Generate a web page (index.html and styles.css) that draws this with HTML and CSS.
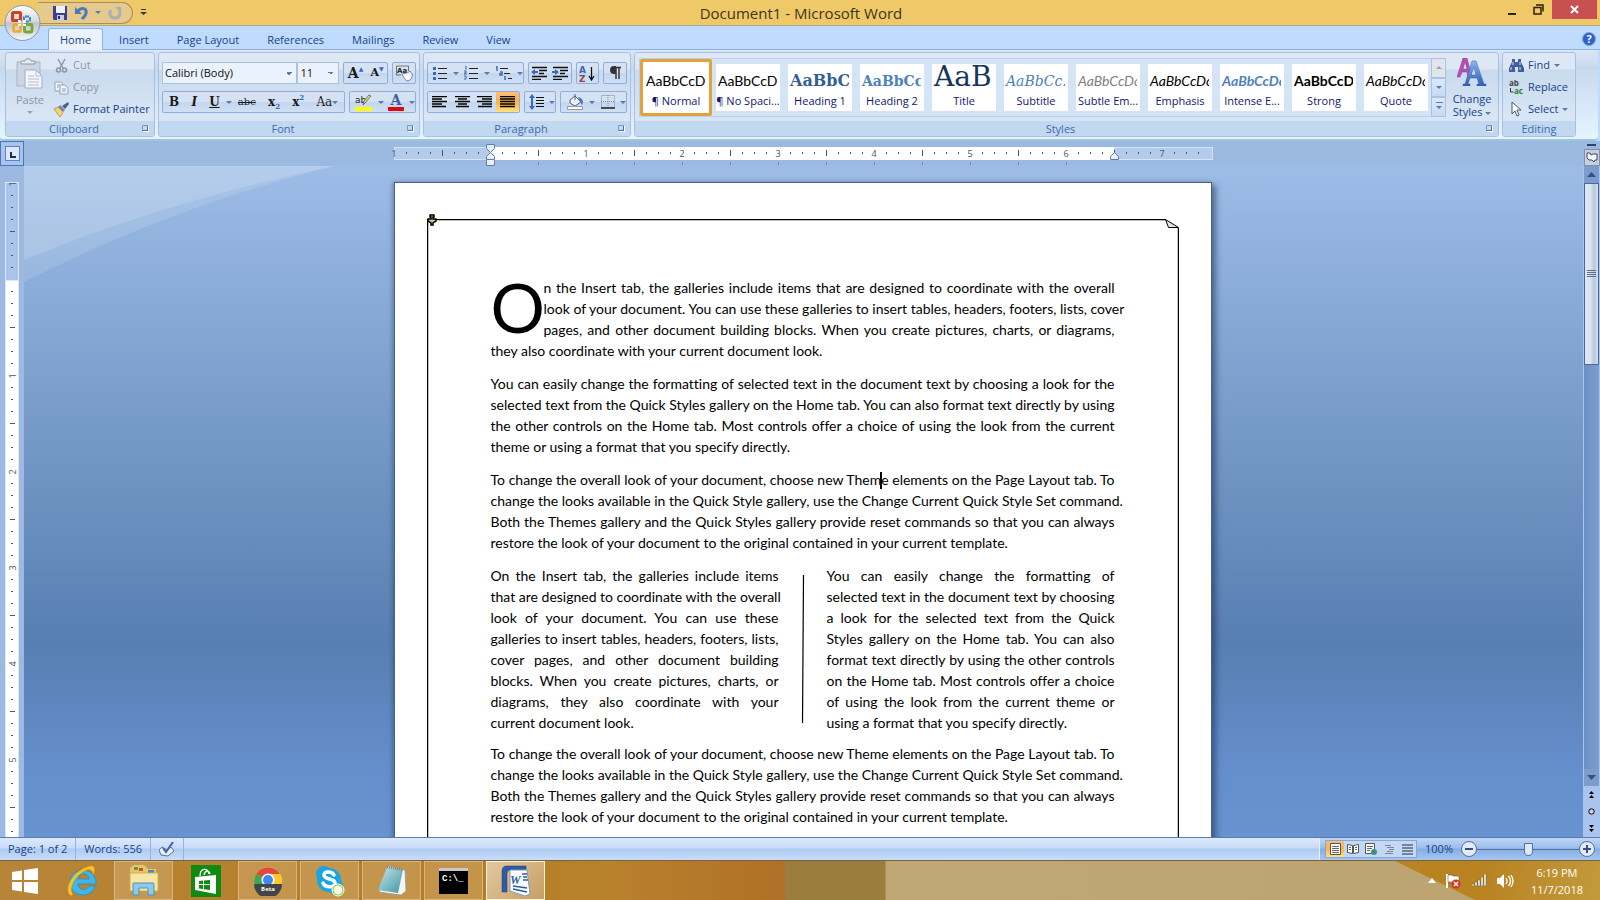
FILE: index.html
```html
<!DOCTYPE html>
<html lang="en">
<head>
<meta charset="utf-8">
<title>Document1 - Microsoft Word</title>
<link rel="stylesheet" href="styles.css">
</head>
<body>
<svg class="defs" aria-hidden="true">
  <defs>
    <linearGradient id="gBlue" x1="0" y1="0" x2="0" y2="1"><stop offset="0" stop-color="#8db4ee"/><stop offset="1" stop-color="#2c5fae"/></linearGradient>
    <linearGradient id="gOrb" x1="0" y1="0" x2="0" y2="1"><stop offset="0" stop-color="#fdfdfd"/><stop offset=".45" stop-color="#d6dae2"/><stop offset=".5" stop-color="#bcc3d0"/><stop offset="1" stop-color="#f6f8fb"/></linearGradient>
    <linearGradient id="gTeal" x1="0" y1="0" x2="1" y2="1"><stop offset="0" stop-color="#c8e6ea"/><stop offset="1" stop-color="#3f97a5"/></linearGradient>
  </defs>
</svg>

<header class="titlebar">
  <div class="quick">
    <button class="plain" aria-label="Save"><svg width="14" height="14" viewBox="0 0 14 14"><path d="M0 0h14v14H1l-1-1z" fill="#3c3f94"/><path d="M3 0h9v7H3z" fill="#eef2fb"/><path d="M4 9h7v5H4z" fill="#c7cbe6"/><path d="M5 10h2v3H5z" fill="#2b2c6a"/></svg></button>
    <button class="plain" aria-label="Undo"><svg width="14" height="14" viewBox="0 0 14 14"><path d="M4 5c3-4 9-3 8 2 0 2-2 4-4 6" fill="none" stroke="#4a78c4" stroke-width="3"/><path d="M1 1v7h7z" fill="#4a78c4"/></svg></button>
    <i class="caret"></i>
    <button class="plain" aria-label="Redo"><svg width="14" height="14" viewBox="0 0 14 14"><path d="M3 4c-3 4 0 8 4 8 5 0 6-5 4-8" fill="none" stroke="#a9b0b8" stroke-width="3"/><path d="M7 1h6v6z" fill="#a9b0b8"/></svg></button>
  </div>
  <button class="plain customize" aria-label="Customize Quick Access Toolbar"><svg width="7" height="7" viewBox="0 0 7 7"><path d="M1 0h5v1H1zM0 3h7L3.500 6z" fill="#2f3a4c"/></svg></button>
  <h1>Document1 - Microsoft Word</h1>
  <div class="winctl">
    <button class="plain" aria-label="Minimize"><svg width="10" height="12"><path d="M1 9h8v2H1z" fill="#2b220f"/></svg></button>
    <button class="plain" aria-label="Restore"><svg width="11" height="11"><path d="M1 3.500h7v6.500H1zM3 1h7v6.500" fill="none" stroke="#2b220f" stroke-width="1.500"/></svg></button>
    <button class="plain close" aria-label="Close"><svg width="9" height="9"><path d="M1 1l7 7M8 1L1 8" stroke="#fff" stroke-width="2"/></svg></button>
  </div>
</header>
<button class="orb" aria-label="Office Button"><svg width="37" height="38" viewBox="0 0 37 38">
  <circle cx="18.500" cy="19" r="17.500" fill="url(#gOrb)" stroke="#8d96a8"/>
  <g fill="none"><rect x="8.500" y="8.500" width="8" height="8" rx="1" stroke="#d4401c" stroke-width="3.200"/><rect x="20" y="12.500" width="6" height="5" rx="1" stroke="#3b86c8" stroke-width="2" stroke-dasharray="4 1"/><rect x="9.500" y="20.500" width="7" height="7" rx="1" stroke="#f0a91c" stroke-width="2.400"/><rect x="20.500" y="20.500" width="7.500" height="7.500" rx="1" stroke="#76a832" stroke-width="2.800"/></g>
  <path d="M14 16h3v3h-3zM19 16h3v3h-3zM14 20h3v2h-3zM19 20h3v2h-3z" fill="#eef1f6"/></svg></button>

<nav class="tabs">
  <button class="tab on">Home</button><button class="tab">Insert</button><button class="tab">Page Layout</button><button class="tab">References</button><button class="tab">Mailings</button><button class="tab">Review</button><button class="tab">View</button>
  <button class="plain help" aria-label="Help"><svg width="14" height="14"><circle cx="7" cy="7" r="6.500" fill="#2e62c9" stroke="#7fa1dd"/><text x="7" y="11" text-anchor="middle" class="helpq">?</text></svg></button>
</nav>

<section class="ribbon">
  <div class="group clipboard">
    <div class="body">
      <button class="paste" disabled><svg width="28" height="31" viewBox="0 0 28 31"><path d="M1 4h23v24H1z" fill="#ccd5e3" stroke="#a9b3c4"/><path d="M5 6V3h4c0-3 6-3 6 0h4v3z" fill="#e4e8ef" stroke="#8f99ab"/><path d="M9 12h11l6 6v12H9z" fill="#f2f5fb" stroke="#a3afc2"/><path d="M20 12v6h6M12 18h6M12 21h11M12 24h11M12 27h11" fill="none" stroke="#b4bfd2"/></svg><span>Paste</span><i class="caret dim"></i></button>
      <div class="stack">
        <button class="cmd" disabled><svg width="15" height="15" viewBox="0 0 15 15"><path d="M4 1l5 9M11 1L6 10" stroke="#8996ab" stroke-width="1.500"/><circle cx="4.500" cy="12" r="2" fill="none" stroke="#8996ab" stroke-width="1.500"/><circle cx="10.500" cy="12" r="2" fill="none" stroke="#8996ab" stroke-width="1.500"/></svg>Cut</button>
        <button class="cmd" disabled><svg width="15" height="15" viewBox="0 0 15 15"><path d="M1 2h6l2 2v7H1z" fill="#eef2f9" stroke="#97a3b8"/><path d="M6 5h5l3 3v6H6z" fill="#eef2f9" stroke="#97a3b8"/><path d="M3 5h3M3 7h2M8 9h4M8 11h4" stroke="#97a3b8"/></svg>Copy</button>
        <button class="cmd"><svg width="15" height="15" viewBox="0 0 15 15"><path d="M14 0l1 2-4 5-3-3z" fill="#4a5f8c"/><path d="M6 3l5 5-2 2-5-5z" fill="#8b7cb0"/><path d="M4 5l5 5c-1 3-2 4-3 5L0 7z" fill="#f1d477" stroke="#a98532" stroke-width=".7"/></svg>Format Painter</button>
      </div>
    </div>
    <h2>Clipboard<i class="launch"></i></h2>
  </div>

  <div class="group font">
    <div class="body rows">
      <div class="row">
        <select class="combo face" aria-label="Font"><option>Calibri (Body)</option></select><select class="combo size" aria-label="Font Size"><option>11</option></select>
        <div class="set w44"><button aria-label="Grow Font" class="ser big">A<sup class="up">▲</sup></button><button aria-label="Shrink Font" class="ser small">A<sup class="up">▼</sup></button></div>
        <div class="set w24"><button aria-label="Clear Formatting"><svg width="17" height="17" viewBox="0 0 17 17"><text x="1" y="8" class="tiny">Aa</text><path d="M.5 1h12v5M.5 1v9H5" fill="none" stroke="#555" stroke-width=".8"/><path d="M6 9c2-1 5 0 8-3l2 3c1 3-1 6-4 7-3 0-4-4-6-7z" fill="#f4f6fb" stroke="#78829a"/></svg></button></div>
      </div>
      <div class="row">
        <div class="set w184">
          <button class="ser b">B</button><button class="ser i">I</button><button class="ser u">U</button><i class="caret"></i><button class="ser strike">abc</button><button class="ser">x<sub>2</sub></button><button class="ser">x<sup>2</sup></button><button class="ser aa">Aa<i class="caret"></i></button>
        </div>
        <div class="set w67">
          <button aria-label="Text Highlight Color"><svg width="18" height="17" viewBox="0 0 18 17"><text x="0" y="9" class="tiny ab">ab</text><path d="M16 2l-6 7-2 2 1-4 5-6z" fill="#e6e06a" stroke="#555" stroke-width=".8"/><path d="M0 13h17v4H0z" fill="#ff0"/></svg></button><i class="caret"></i>
          <button aria-label="Font Color"><svg width="16" height="17" viewBox="0 0 16 17"><text x="8" y="11" text-anchor="middle" class="fontA">A</text><path d="M0 13h16v4H0z" fill="#e8050b"/></svg></button><i class="caret"></i>
        </div>
      </div>
    </div>
    <h2>Font<i class="launch"></i></h2>
  </div>

  <div class="group para">
    <div class="body rows">
      <div class="row">
        <div class="set w99">
          <button aria-label="Bullets"><svg width="15" height="14"><path d="M5 2.500h9M5 7.500h9M5 12.500h9" stroke="#222"/><path d="M0 1h3v3H0zM0 6h3v3H0zM0 11h3v3H0z" fill="#3c68b8"/></svg></button><i class="caret"></i>
          <button aria-label="Numbering"><svg width="15" height="14"><path d="M5 2.500h9M5 7.500h9M5 12.500h9" stroke="#222"/><path d="M1 0h1v4M0 5h2v2H0v1h3M0 10h2v3H0" fill="none" stroke="#3c68b8"/></svg></button><i class="caret"></i>
          <button aria-label="Multilevel List"><svg width="17" height="15"><path d="M5 2.500h8M9 7.500h6M13 12.500h4" stroke="#222"/><path d="M1 1h1v4M5 6h2v3H5V7M10 10v4" fill="none" stroke="#3c68b8" stroke-width="1.500"/></svg></button><i class="caret"></i>
        </div>
        <div class="set w45">
          <button aria-label="Decrease Indent"><svg width="17" height="14"><path d="M1 1.500h15M8 4.500h8M8 7.500h5M1 10.500h15M1 13.500h9" stroke="#111" stroke-width="1.500"/><path d="M0 6l4-3v2h3v2H4v2z" fill="#3c68b8"/></svg></button><button aria-label="Increase Indent"><svg width="17" height="14"><path d="M1 1.500h15M8 4.500h8M8 7.500h5M1 10.500h15M1 13.500h9" stroke="#111" stroke-width="1.500"/><path d="M7 6L3 3v2H0v2h3v2z" fill="#3c68b8"/></svg></button>
        </div>
        <div class="set w24"><button aria-label="Sort"><svg width="17" height="17"><text x="0" y="8" class="sort a">A</text><text x="0" y="17" class="sort z">Z</text><path d="M12.500 2v12M10 11l2.500 4 2.500-4" fill="none" stroke="#111" stroke-width="1.300"/></svg></button></div>
        <div class="set w24"><button aria-label="Show paragraph marks"><svg width="12" height="14"><path d="M6 1.500h6M7 1v12M10 1v12" stroke="#333" stroke-width="1.500"/><path d="M7 0H5a4 4 0 000 8h2z" fill="#333"/></svg></button></div>
      </div>
      <div class="row">
        <div class="set w93">
          <button aria-label="Align Left"><svg width="15" height="12"><path d="M0 .5h15M0 3h10M0 5.500h15M0 8h10M0 10.500h14" stroke="#000" stroke-width="1.300"/></svg></button><button aria-label="Center"><svg width="15" height="12"><path d="M0 .5h15M3 3h9M0 5.500h15M3 8h9M1 10.500h13" stroke="#000" stroke-width="1.300"/></svg></button><button aria-label="Align Right"><svg width="15" height="12"><path d="M0 .5h15M5 3h10M0 5.500h15M5 8h10M1 10.500h14" stroke="#000" stroke-width="1.300"/></svg></button><button class="hot" aria-label="Justify"><svg width="15" height="12"><path d="M0 .5h15M0 3h15M0 5.500h15M0 8h15M0 10.500h15" stroke="#000" stroke-width="1.300"/></svg></button>
        </div>
        <div class="set w32"><button aria-label="Line Spacing"><svg width="16" height="16"><path d="M7 3.500h8M7 6.500h8M7 9.500h8M7 12.500h8" stroke="#111"/><path d="M3 0l3 4H4v8h2l-3 4-3-4h2V4H0z" fill="#3c68b8"/></svg></button><i class="caret"></i></div>
        <div class="set w67">
          <button aria-label="Shading"><svg width="17" height="16" viewBox="0 0 17 16"><path d="M3 6l5-4 6 6-6 4-5-3z" fill="#eef3fa" stroke="#53617c"/><path d="M8 6V0" stroke="#53617c"/><path d="M11 3c5 1 6 5 4 8l-2-3z" fill="#4d7ac4"/><path d="M.5 12.500h15v3H.5z" fill="#fff" stroke="#9a9a9a"/></svg></button><i class="caret"></i>
          <button aria-label="Borders"><svg width="14" height="14"><path d="M.5.5h13v12H.5zM7 0v12M0 6.500h14" fill="none" stroke="#7d8695" stroke-dasharray="1 1"/><path d="M0 13h14" stroke="#222" stroke-width="1.500"/></svg></button><i class="caret"></i>
        </div>
      </div>
    </div>
    <h2>Paragraph<i class="launch"></i></h2>
  </div>

  <div class="group styles">
    <div class="body">
      <div class="gallery">
        <button class="tile sel"><span class="smp">AaBbCcDc</span><span class="nm">¶ Normal</span></button>
        <button class="tile"><span class="smp">AaBbCcDc</span><span class="nm">¶ No Spaci...</span></button>
        <button class="tile"><span class="smp h1s">AaBbCc</span><span class="nm">Heading 1</span></button>
        <button class="tile"><span class="smp h2s">AaBbCc</span><span class="nm">Heading 2</span></button>
        <button class="tile"><span class="smp ttl">AaB</span><span class="nm">Title</span></button>
        <button class="tile"><span class="smp subt">AaBbCc.</span><span class="nm">Subtitle</span></button>
        <button class="tile"><span class="smp it gray">AaBbCcDc</span><span class="nm">Subtle Em...</span></button>
        <button class="tile"><span class="smp it">AaBbCcDc</span><span class="nm">Emphasis</span></button>
        <button class="tile"><span class="smp it blue">AaBbCcDc</span><span class="nm">Intense E...</span></button>
        <button class="tile"><span class="smp strong">AaBbCcDc</span><span class="nm">Strong</span></button>
        <button class="tile"><span class="smp it">AaBbCcDc</span><span class="nm">Quote</span></button>
        <div class="scroller"><button disabled aria-label="Row up"><i class="caret flip dim"></i></button><button aria-label="Row down"><i class="caret"></i></button><button aria-label="More styles"><i class="caret more"></i></button></div>
      </div>
      <button class="change"><svg width="30" height="28" viewBox="0 0 30 28"><path fill-rule="evenodd" d="M6 0h4l5 19h-4l-1-5H5l-2 5H0zM8 4l-2 7h4z" fill="#b44fb4" stroke="#8c3a93" stroke-width=".5"/><path fill-rule="evenodd" d="M15 3h4l8 23h2v2h-9v-2h2l-2-6h-7l-2 6h2v2H6v-2h2zM17 9l-3 8h5z" fill="url(#gBlue)" stroke="#2f62ae" stroke-width=".5"/></svg><span>Change<br>Styles <i class="caret"></i></span></button>
    </div>
    <h2>Styles<i class="launch"></i></h2>
  </div>

  <div class="group editing">
    <div class="body stack">
      <button class="cmd"><svg width="15" height="15" viewBox="0 0 15 15"><path d="M3 1h3v3h3V1h3v3l3 6v4H9V9H6v5H0v-4l3-6z" fill="#3f5f9e"/><path d="M2 9v3M4 4v3M11 4v3M11 9v3" stroke="#dbe6f8"/></svg>Find <i class="caret"></i></button>
      <button class="cmd"><svg width="15" height="15" viewBox="0 0 15 15"><text x="0" y="6" class="rep">ab</text><text x="5" y="14" class="rep g">ac</text><path d="M1.500 8v4h3" fill="none" stroke="#333"/></svg>Replace</button>
      <button class="cmd"><svg width="15" height="15" viewBox="0 0 15 15"><path d="M3 0v12l3-3 2 5 2-1-2-5h4z" fill="#fff" stroke="#4a5670"/></svg>Select <i class="caret"></i></button>
    </div>
    <h2>Editing</h2>
  </div>
</section>

<main class="work">
  <button class="tabstop" aria-label="Tab selector"><span><svg width="6" height="6"><path d="M1 0v5h5" fill="none" stroke="#1c2f55" stroke-width="2"/></svg></span></button>
  <div class="hruler">
    <svg width="820" height="25" viewBox="0 0 820 25">
      <defs><pattern id="tk" x="96" y="0" width="96" height="25" patternUnits="userSpaceOnUse"><path d="M12.500 11v2M24.500 11v2M36.500 11v2M48.500 9v6M60.500 11v2M72.500 11v2M84.500 11v2" stroke="#4b5568"/></pattern></defs>
      <rect x=".5" y="6.500" width="818" height="12" fill="#b5cbeb" stroke="#d5e4f8"/>
      <rect x="96" y="6" width="624" height="13" fill="#fff"/>
      <rect x="0" y="0" width="806" height="25" fill="url(#tk)"/>
      <path d="M144.500 21v3M192.500 21v3M240.500 21v3M288.500 21v3M336.500 21v3M384.500 21v3M432.500 21v3M480.500 21v3M528.500 21v3M576.500 21v3M624.500 21v3M672.500 21v3" stroke="#6f87ad"/>
      <g class="num"><text x="0" y="16">1</text><text x="192" y="16">1</text><text x="288" y="16">2</text><text x="384" y="16">3</text><text x="480" y="16">4</text><text x="576" y="16">5</text><text x="672" y="16">6</text><text x="768" y="16">7</text></g>
      <g fill="#e8f0fb" stroke="#5f7fb2"><path d="M92.500 3.500h8v4l-4 4-4-4zM92.500 18.500v-3l4-4 4 4v3zM92.500 18.500h8v6h-8z"/><path d="M716.500 18.500v-3l4-4 4 4v3z"/></g>
    </svg>
  </div>
  <div class="corner"><i></i><button aria-label="View Ruler"><svg width="12" height="11"><path d="M1 1h3l1 2 2-1h4v6H9L8 10 6 8H3L1 6z" fill="#f3f5fa" stroke="#3d4a66"/></svg></button></div>

  <div class="vruler">
    <svg width="24" height="672" viewBox="0 0 24 672">
      <defs><pattern id="vk" x="0" y="114" width="24" height="96" patternUnits="userSpaceOnUse"><path d="M11 11.500h2M11 23.500h2M11 35.500h2M10 47.500h5M11 59.500h2M11 71.500h2M11 83.500h2" stroke="#4b5568"/></pattern></defs>
      <rect x="5" y="16" width="14" height="656" fill="#dbe7f8"/><rect x="6" y="17" width="12" height="97" fill="#aac4ea"/><rect x="6" y="115" width="12" height="557" fill="#fff"/>
      <rect x="0" y="20" width="24" height="652" fill="url(#vk)"/>
      <g class="num"><text transform="translate(16 18) rotate(-90)">1</text><text transform="translate(16 210) rotate(-90)">1</text><text transform="translate(16 306) rotate(-90)">2</text><text transform="translate(16 402) rotate(-90)">3</text><text transform="translate(16 498) rotate(-90)">4</text><text transform="translate(16 594) rotate(-90)">5</text></g>
    </svg>
  </div>
  <div class="canvas">
    <svg class="shine" width="312" height="118" viewBox="0 0 312 118"><path d="M0 0h310Q150 40 0 116z" fill="#fff" opacity=".12"/><path d="M0 0h310Q140 36 0 94z" fill="#fff" opacity=".15"/></svg>
    <article class="page">
      <svg class="frame" width="752" height="100%"><path d="M0 .5h739M.5 0v900M751.500 9v900" fill="none" stroke="#000" stroke-width="1.500"/><path d="M738.500.5l13 8h-10z" fill="#e4e4e4" stroke="#000"/></svg>
      <svg class="anchor" width="10" height="12"><path d="M3 1h4v2H6v2h3v2L6 9v2H4V9L1 7V5h3V3H3z" fill="#c8c89a" stroke="#000" stroke-width="1.500"/></svg>
      <p class="j"><span class="cap">O</span>
        <span>n the Insert tab, the galleries include items that are designed to coordinate with the overall</span><span>look of your document. You can use these galleries to insert tables, headers, footers, lists, cover</span><span>pages, and other document building blocks. When you create pictures, charts, or diagrams,</span><span class="end">they also coordinate with your current document look.</span></p>
      <p class="j"><span>You can easily change the formatting of selected text in the document text by choosing a look for the</span><span>selected text from the Quick Styles gallery on the Home tab. You can also format text directly by using</span><span>the other controls on the Home tab. Most controls offer a choice of using the look from the current</span><span class="end">theme or using a format that you specify directly.</span></p>
      <p class="j"><span>To change the overall look of your document, choose new Them<b class="ibeam"></b>e elements on the Page Layout tab. To</span><span>change the looks available in the Quick Style gallery, use the Change Current Quick Style Set command.</span><span>Both the Themes gallery and the Quick Styles gallery provide reset commands so that you can always</span><span class="end">restore the look of your document to the original contained in your current template.</span></p>
      <div class="cols">
        <p class="j"><span>On the Insert tab, the galleries include items</span><span>that are designed to coordinate with the overall</span><span>look of your document. You can use these</span><span>galleries to insert tables, headers, footers, lists,</span><span>cover pages, and other document building</span><span>blocks. When you create pictures, charts, or</span><span>diagrams, they also coordinate with your</span><span class="end">current document look.</span></p>
        <svg width="48" height="148" viewBox="0 0 48 148"><path d="M24.500 0l-1 148" stroke="#000" stroke-width="1.200"/></svg>
        <p class="j"><span>You can easily change the formatting of</span><span>selected text in the document text by choosing</span><span>a look for the selected text from the Quick</span><span>Styles gallery on the Home tab. You can also</span><span>format text directly by using the other controls</span><span>on the Home tab. Most controls offer a choice</span><span>of using the look from the current theme or</span><span class="end">using a format that you specify directly.</span></p>
      </div>
      <p class="j"><span>To change the overall look of your document, choose new Theme elements on the Page Layout tab. To</span><span>change the looks available in the Quick Style gallery, use the Change Current Quick Style Set command.</span><span>Both the Themes gallery and the Quick Styles gallery provide reset commands so that you can always</span><span class="end">restore the look of your document to the original contained in your current template.</span></p>
    </article>
  </div>
  <div class="vscroll">
    <button class="arrow" aria-label="Scroll up"><svg width="9" height="5"><path d="M0 5l4.500-5L9 5z" fill="#34508a"/></svg></button>
    <div class="track"><div class="thumb"><i></i><i></i><i></i><i></i></div></div>
    <button class="arrow" aria-label="Scroll down"><svg width="9" height="5"><path d="M0 0l4.500 5L9 0z" fill="#34508a"/></svg></button>
    <button class="jump" aria-label="Previous page"><svg width="5" height="7"><path d="M0 3l2.500-3L5 3zM0 7l2.500-3L5 7z" fill="#000"/></svg></button>
    <button class="jump" aria-label="Select browse object"><svg width="7" height="7"><circle cx="3.500" cy="3.500" r="2.700" fill="#cfd6e2" stroke="#000"/></svg></button>
    <button class="jump" aria-label="Next page"><svg width="5" height="7"><path d="M0 0l2.500 3L5 0zM0 4l2.500 3L5 4z" fill="#000"/></svg></button>
  </div>
</main>

<footer class="status">
  <span class="cell">Page: 1 of 2</span><span class="cell">Words: 556</span>
  <span class="cell"><svg width="16" height="15" viewBox="0 0 16 15"><path d="M0 8l3-3 5 3 4-3 3 4-6 5-7-1z" fill="#e9eefa" stroke="#5f6f98"/><path d="M4 6l3 4 7-10" fill="none" stroke="#3a66b8" stroke-width="2"/></svg></span>
  <div class="right">
    <div class="views">
      <button class="hot" aria-label="Print Layout"><svg width="11" height="12"><path d="M.5.5h10v11H.5z" fill="#fff" stroke="#555"/><path d="M2 3.500h7M2 5.500h7M2 7.500h7M2 9.500h7" stroke="#666"/></svg></button>
      <button aria-label="Full Screen Reading"><svg width="12" height="12"><path d="M.5 1.500l5 1v8l-5-1zM11.500 1.500l-5 1v8l5-1z" fill="#fff" stroke="#555"/><path d="M2 4.500h2M2 6.500h2M8 4.500h2M8 6.500h2" stroke="#666"/></svg></button>
      <button aria-label="Web Layout"><svg width="12" height="12"><path d="M.5.5h9v10h-9z" fill="#fff" stroke="#555"/><path d="M2 3.500h6M2 5.500h5M2 7.500h3" stroke="#666"/><circle cx="9" cy="9" r="3" fill="#3d8f8a"/></svg></button>
      <button aria-label="Outline"><svg width="11" height="11"><path d="M1 1.500h6M3 3.500h7M5 5.500h5M3 7.500h6M1 9.500h8" stroke="#7b8595"/></svg></button>
      <button aria-label="Draft"><svg width="11" height="11"><path d="M0 1h11M0 4h11M0 7h11M0 10h11" stroke="#5e6878" stroke-width="1.500"/></svg></button>
    </div>
    <span class="pct">100%</span>
    <button class="round" aria-label="Zoom out"><svg width="8" height="8"><path d="M0 4h8" stroke="#35507f" stroke-width="2"/></svg></button>
    <input type="range" min="10" max="190" value="100" aria-label="Zoom">
    <button class="round" aria-label="Zoom in"><svg width="8" height="8"><path d="M0 4h8M4 0v8" stroke="#35507f" stroke-width="2"/></svg></button>
  </div>
</footer>

<footer class="taskbar">
  <button class="app start" aria-label="Start"><svg width="26" height="26"><path d="M0 4l10-1.500V12H0zM12 2l14-2v12H12zM0 14h10v9.500L0 22zM12 14h14v12l-14-2z" fill="#fff"/></svg></button>
  <button class="app" aria-label="Internet Explorer"><svg width="30" height="32" viewBox="0 0 30 32"><path fill-rule="evenodd" d="M29 19H11c1 7 9 7 11 2h6C25 34 3 33 3 17 3 1 30 1 29 19zM11 14h11c-1-7-10-7-11 0z" fill="#3fb5ea" stroke="#2286bd" stroke-width=".7"/><path d="M4 31C-5 25 6 5 23 1c5-1 6 4 3 9 0-4-2-6-6-5C9 9 1 23 6 29z" fill="#f6c32a" stroke="#c58f13" stroke-width=".5"/></svg></button>
  <button class="app open" aria-label="File Explorer"><svg width="32" height="31" viewBox="0 0 32 31"><path d="M2 3l4-3h10l4 4h8v22H2z" fill="#e7c667"/><path d="M6 2h4v3H6z" fill="#4aa05b"/><path d="M11 3h4v3h-4z" fill="#d34b3a"/><path d="M20 5h6v3h-6z" fill="#3c8fc8"/><path d="M2 8h28v18H2z" fill="#f7e6a4" stroke="#cfae55"/><path d="M5 30V19q0-1 1-1h19q1 0 1 1v11h-6v-7h-9v7z" fill="#8fc8e8" stroke="#4a94be"/></svg></button>
  <button class="app" aria-label="Store"><svg width="30" height="32"><path d="M0 0h30v32H0z" fill="#108a10"/><path d="M4 12l21-2v19L4 25z" fill="#fff"/><path d="M9 11c0-8 8-9 9-2M13 10c1-5 5-5 6-1" fill="none" stroke="#fff" stroke-width="1.300"/><path d="M8 16l4-.5V19H8zM13 15.500l6-.5v4h-6zM8 20h4v4l-4-.5zM13 20h6v5l-6-.8z" fill="#108a10"/></svg></button>
  <button class="app open" aria-label="Chrome Beta"><svg width="30" height="30" viewBox="0 0 30 30"><circle cx="15" cy="15" r="14" fill="#fbc92f"/><path d="M15 15L3 8A14 14 0 0127 8z" fill="#dd4b3e"/><path d="M15 15L3 8a14 14 0 005 19z" fill="#3aa757"/><path d="M27 8H15v7h14a14 14 0 00-2-7z" fill="#fbc92f"/><circle cx="15" cy="14" r="6.500" fill="#fff"/><circle cx="15" cy="14" r="5" fill="#4285f4"/><path d="M1 18h28a14 14 0 01-28 0z" fill="#454545"/><text x="15" y="25" text-anchor="middle" class="beta">Beta</text></svg></button>
  <button class="app open" aria-label="Skype"><svg width="30" height="32" viewBox="0 0 30 32"><circle cx="9" cy="9" r="8" fill="#17a5e6"/><circle cx="20" cy="21" r="8" fill="#17a5e6"/><circle cx="14" cy="15" r="12" fill="#17a5e6"/><path d="M19 10c-2-4-10-4-10 0 0 5 11 3 11 8 0 5-10 5-12 0" fill="none" stroke="#fff" stroke-width="3.500" stroke-linecap="round"/><circle cx="23" cy="25" r="6" fill="#8cc63f" stroke="#fff"/><circle cx="23" cy="25" r="4.500" fill="#f8fbe8"/></svg></button>
  <button class="app open" aria-label="Notepad"><svg width="30" height="31" viewBox="0 0 30 31"><path d="M11 1l17 4 1 21-5 4L2 27z" fill="#f4f6f4" stroke="#8d9694" stroke-width=".7"/><path d="M10 2l16 3-5 23-20-3z" fill="url(#gTeal)"/><path d="M10 2l16 3" stroke="#777" stroke-width="2" stroke-dasharray="1 1"/></svg></button>
  <button class="app open" aria-label="Command Prompt"><svg width="29" height="26"><path d="M0 0h29v26H0z" fill="#000"/><path d="M0 0h29v3H0z" fill="#c9c9c9"/><text x="3" y="13" class="cmdt">C:\_</text></svg></button>
  <button class="app open now" aria-label="Word"><svg width="30" height="31" viewBox="0 0 30 31"><path d="M1 27V6q0-5 5-5h19v4H9q-3 0-3 4v18z" fill="#2f5ba4" stroke="#1d3f7c" stroke-width=".5"/><path d="M9 5h17l3 24-5 2-15-5z" fill="#fafcff" stroke="#8698b8"/><text x="9" y="19" class="wd">W</text><path d="M21 9h5M22 12h4M22 15h5M12 21l14 2M12 24l14 3" stroke="#2f5ba4" stroke-width="1.500"/></svg></button>
  <div class="tray">
    <svg width="8" height="5"><path d="M0 5l4-5 4 5z" fill="#fff"/></svg>
    <svg width="18" height="16"><path d="M2 1v14" stroke="#fff" stroke-width="2"/><path d="M3 2h4l1 1h6v7H8L7 9H3z" fill="#fff" stroke="#6a5a36" stroke-width=".6"/><circle cx="11" cy="11" r="4.500" fill="#d8322c"/><path d="M9 9l4 4M13 9l-4 4" stroke="#fff" stroke-width="1.500"/></svg>
    <svg width="16" height="13"><path d="M0 10h2v2H0zM3 8h2v4H3zM6 6h2v6H6zM9 3h2v9H9zM12 0h2v12h-2z" fill="#fff" stroke="#6a5a36" stroke-width=".5"/></svg>
    <svg width="17" height="14"><path d="M0 4h3l4-4v14l-4-4H0z" fill="#fff"/><path d="M9 4q2 3 0 6M11.500 2q4 5 0 10M14 1q4 6 0 12" fill="none" stroke="#fff" stroke-width="1.300"/></svg>
    <div class="clock"><span>6:19 PM</span><span>11/7/2018</span></div>
  </div>
</footer>
</body>
</html>
```
FILE: styles.css
```css
* { box-sizing: border-box; }
html, body { height: 100%; margin: 0; }
body {
  display: flex; flex-direction: column; overflow: hidden; position: relative;
  font: 11px/16px "Open Sans", "Noto Sans", sans-serif; color: #15428b; background: #bfdbff;
}
button { font: inherit; color: inherit; border: 0; background: none; padding: 0; margin: 0; }
svg { display: block; flex: none; }
.defs { position: absolute; width: 0; height: 0; }
h1, h2, p { margin: 0; font-weight: 400; }
.plain { display: flex; align-items: center; justify-content: center; }
.caret { flex: none; display: inline-block; width: 0; height: 0; border: 3px solid transparent; border-top-color: #5b7bab; border-bottom: 0; vertical-align: middle; }
.caret.dim { border-top-color: #9aa4b5; }
.caret.flip { transform: rotate(180deg); }

/* title bar */
.titlebar { display: flex; align-items: center; height: 26px; flex: none; background: #efc868; border-bottom: 1px solid #a8a88c; padding-left: 38px; }
.quick { display: flex; align-items: center; gap: 7px; height: 22px; width: 95px; padding-left: 15px; border: 1px solid #a8905a; border-left: 0; border-radius: 0 11px 11px 0; background: #e6ca8c; }
.customize { margin-left: 7px; }
.titlebar h1 { flex: 1; text-align: center; font-size: 15px; line-height: 25px; color: #3f351b; padding-right: 44px; padding-top: 1px; }
.winctl { display: flex; align-self: flex-start; align-items: center; height: 19px; margin-right: 3px; }
.winctl button { width: 26px; height: 19px; }
.winctl .close { width: 45px; background: #c75050; margin-left: 1px; }
.orb { position: absolute; left: 4px; top: 4px; z-index: 3; }

/* tabs */
.tabs { display: flex; height: 24px; flex: none; padding: 2px 4px 0 48px; background: #bfdbff; border-bottom: 1px solid #8db2e3; }
.tab { padding: 1px 14px 0; height: 22px; }
.tab.on { border: 1px solid #8db2e3; border-bottom: 0; border-radius: 3px 3px 0 0; background: #eaf2fd; padding: 0 11px; margin-right: 2px; }
.help { margin-left: auto; }
.helpq { font: bold 11px "Open Sans", sans-serif; fill: #fff; }

/* ribbon */
.ribbon { display: flex; flex: none; gap: 3px; height: 91px; padding: 2px 22px 2px 5px; margin-right: 2px; border-radius: 0 0 4px 4px; background: linear-gradient(#dbe6f4, #c9d9ed 20%, #d7e6f9 60%, #e5f5fc); border-bottom: 2px solid #9fc6d8; }
.group { display: flex; flex-direction: column; border: 1px solid #a7c1e2; border-radius: 3px; background: linear-gradient(#dee8f5 0, #dee8f5 16px, #c9daee 17px, #d9e6f5 66px); }
.group h2 { height: 15px; font-size: 11px; line-height: 15px; text-align: center; color: #3e6aaa; background: #c2d8f1; position: relative; border-radius: 0 0 2px 2px; padding-right: 12px; }
.group.editing h2 { padding-right: 0; }
.body { flex: 1; display: flex; min-height: 0; }
.launch { position: absolute; right: 5px; top: 4px; width: 7px; height: 7px; border: 1px solid #7f9cc7; border-right-color: #fff; border-bottom-color: #fff; }
.launch::after { content: ""; position: absolute; right: 0; bottom: 0; width: 4px; height: 4px; border: solid #4b6ea5; border-width: 0 1px 1px 0; }
.clipboard { width: 150px; }
.font { width: 262px; }
.para { width: 208px; }
.styles { flex: 1; min-width: 0; }
.editing { width: 74px; }
.paste { display: flex; flex-direction: column; align-items: center; width: 44px; padding: 5px 0 0 4px; margin-right: 4px; }
.paste span { margin-top: 3px; }
.paste .caret { margin-top: 3px; }
.stack { display: flex; flex-direction: column; gap: 0; padding-top: 1px; }
.cmd { display: flex; align-items: center; gap: 4px; height: 22px; white-space: nowrap; }
button:disabled { color: #8d95a3; }
.editing .stack { padding-left: 6px; }
.rows { flex-direction: column; gap: 7px; padding: 9px 3px 0; }
.row { display: flex; gap: 4px; height: 22px; }
.combo { appearance: none; height: 22px; border: 1px solid #abc1de; border-radius: 0; padding: 0 2px; font: 11px/20px "Open Sans", sans-serif; color: #111; background-color: #eaf2fb; background-image: linear-gradient(45deg, transparent 50%, #5b7bab 50%), linear-gradient(-45deg, transparent 50%, #5b7bab 50%); background-size: 3px 3px; background-position: right 7px center, right 4px center; background-repeat: no-repeat; }
.face { width: 136px; margin-right: -4px; }
.size { width: 42px; }
.set { display: flex; align-items: center; justify-content: space-around; border: 1px solid #8faedb; border-radius: 2px; background: linear-gradient(#d5e2f3 50%, #c3d6ef 50%, #d0e0f4); color: #1a1a1a; overflow: hidden; }
.set button { display: flex; align-items: center; justify-content: center; height: 20px; flex: 1 1 auto; }
.w24 { width: 24px; } .w32 { width: 32px; } .w44 { width: 45px; } .w45 { width: 45px; } .w67 { width: 67px; } .w93 { width: 93px; } .w99 { width: 99px; } .w184 { width: 184px; }
.set .ser { font: bold 12px/20px "DejaVu Serif", serif; }
.set .big { font-size: 14px; }
.set .small { font-size: 11px; }
.set .i { font-style: italic; }
.set .u { text-decoration: underline; }
.set .strike { font-size: 10px; font-weight: 400; text-decoration: line-through; }
.set .aa { font-size: 12px; font-weight: 400; }
.ser sub, .ser sup { font-size: 7px; line-height: 8px; color: #3c68b8; }
.ser sub { margin-top: 9px; }
.ser sup { margin-top: -8px; }
.ser .up { font-size: 6px; }
.hot { background: linear-gradient(#fbbd7a, #fcb04d 50%, #fee37c); }
.tiny { font: bold 7px "DejaVu Sans", sans-serif; fill: #222; }
.tiny.ab { font-size: 9px; font-weight: 400; }
.fontA { font: bold 14px "DejaVu Serif", serif; fill: #3a5f9c; }
.sort { font: bold 9px "DejaVu Sans", sans-serif; }
.sort.a { fill: #3c68b8; } .sort.z { fill: #9a3a4a; }
.rep { font: bold 8px "Open Sans", sans-serif; fill: #444; }
.rep.g { fill: #2c7d3a; }

/* style gallery */
.gallery { display: flex; flex: 1; margin: 5px 0 4px 4px; border: 1px solid #b9d0ed; background: #d4e4f6; min-width: 0; }
.tile { flex: 1 1 72px; min-width: 0; padding: 2px 1px; border: 3px solid transparent; background: #fff content-box; display: flex; flex-direction: column; text-align: center; color: #14146e; }
.tile.sel { border-color: #e3a23a; background: #fff; border-radius: 2px; }
.smp { display: block; height: 28px; line-height: 34px; overflow: hidden; white-space: nowrap; text-align: left; padding-left: 2px; margin-right: 3px; font-family: Lato, sans-serif; font-size: 14px; color: #000; }
.nm { white-space: nowrap; line-height: 20px; }
.h1s { font: bold 16px/34px "DejaVu Serif", serif; color: #365f91; }
.h2s { font: bold 14px/34px "DejaVu Serif", serif; color: #4f81bd; }
.ttl { font: 28px/26px "DejaVu Serif", serif; color: #17365d; }
.subt { font: italic 14px/34px "DejaVu Serif", serif; color: #4f81bd; }
.it { font-style: italic; }
.gray { color: #808080; }
.blue { color: #4f81bd; font-weight: 700; }
.strong { font-weight: 700; }
.scroller { width: 15px; display: flex; flex-direction: column; margin: -1px; }
.scroller button { flex: 1; display: flex; align-items: center; justify-content: center; border: 1px solid #a9c2e4; background: linear-gradient(#dce8f8, #c6daf3); }
.scroller button:disabled { background: #e2e6ec; }
.more { position: relative; }
.more::before { content: ""; position: absolute; left: -3px; top: -7px; width: 7px; height: 1px; background: #5b7bab; }
.change { width: 52px; display: flex; flex-direction: column; align-items: center; padding-top: 5px; line-height: 13px; }
.change span { margin-top: 6px; }

/* work area */
.work { flex: 1; min-height: 0; display: grid; grid-template: 25px minmax(0, 1fr) / 24px minmax(0, 1fr) 17px; background: #9bb9e1; }
.tabstop { border: 1px solid #4d75bd; padding: 3px 4px; background: #a9c4ec; }
.tabstop span { display: flex; align-items: center; justify-content: center; width: 15px; height: 15px; border: 1px solid #5f83bd; background: #dce8fa; padding: 3px 0 0 1px; }
.hruler { display: flex; justify-content: center; }
.hruler svg { overflow: visible; }
.num { font: 9px "Open Sans", sans-serif; fill: #4b5568; text-anchor: middle; }
.corner { display: flex; flex-direction: column; align-items: center; gap: 3px; padding-top: 3px; }
.corner i { width: 9px; height: 2px; background: #2f4268; }
.corner button { width: 16px; height: 17px; display: flex; align-items: center; justify-content: center; border: 1px solid #8490a8; background: #c7cede; }
.vruler { overflow: hidden; }
.canvas { position: relative; overflow: hidden; padding-right: 2px; background: linear-gradient(#9dbde7, #7397c6 42%, #587fb2 71%, #658fcc 90%, #6892d0); }
.shine { position: absolute; left: 0; top: 0; }
.page { position: relative; width: 818px; height: 900px; margin: 16px auto 0; padding: 94px 96px; border: 1px solid #4b6184; background: #fff; box-shadow: 4px 3px 6px rgba(30, 50, 90, .55), -2px 0 4px rgba(30, 50, 90, .3); font: 14px/21px Lato, sans-serif; font-variant-ligatures: none; color: #000; }
.frame { position: absolute; left: 32px; top: 36px; }
.anchor { position: absolute; left: 32px; top: 31px; }
.j { margin-bottom: 12px; white-space: nowrap; }
.j > span { display: block; text-align: justify; text-align-last: justify; }
.j > .end { text-align-last: left; }
.j > .cap { float: left; width: 53px; height: 63px; font-size: 68px; line-height: 60px; text-align-last: left; }
.ibeam { display: inline-block; width: 2px; height: 17px; margin: 0 -1px; background: #000; vertical-align: -4px; }
.cols { display: grid; grid-template-columns: minmax(0, 1fr) 48px minmax(0, 1fr); align-items: center; margin-bottom: 10px; }
.cols .j { margin-bottom: 0; }
.vscroll { display: flex; flex-direction: column; align-items: center; background: #a9c4ee; }
.arrow { width: 15px; height: 17px; display: flex; align-items: center; justify-content: center; background: #7c9dcc; }
.track { flex: 1; width: 15px; background: linear-gradient(90deg, #6a8fc2, #7d9fce); }
.thumb { height: 31%; display: flex; flex-direction: column; gap: 1px; align-items: center; justify-content: center; border: 1px solid #4d6896; background: linear-gradient(90deg, #dde6f2 40%, #b9c8dc 70%, #d4deea); }
.thumb i { width: 9px; height: 1px; background: #5d718f; }
.jump { height: 17px; display: flex; align-items: center; }

/* status bar */
.status { display: flex; flex: none; height: 23px; border-top: 1px solid #567db1; background: linear-gradient(#dce9fc, #c8dbf7 45%, #aecbf3 50%, #c9ddf9); }
.cell { display: flex; align-items: center; padding: 0 8px; border-right: 1px solid #92b4e2; }
.right { display: flex; align-items: center; margin-left: auto; padding: 0 5px 0 5px; border-left: 1px solid #e8f1fd; background: linear-gradient(#c0d6f5, #9cbeec 45%, #86ade2 50%, #a5c6f1); }
.views { display: flex; width: 92px; height: 18px; border: 1px solid #86a6d4; background: #c3d8f5; }
.views button { flex: 1; display: flex; align-items: center; justify-content: center; }
.pct { width: 44px; text-align: center; }
.round { width: 16px; height: 16px; display: flex; align-items: center; justify-content: center; border: 1px solid #55709c; border-radius: 50%; background: #e1ebf9; }
.right input { appearance: none; width: 102px; height: 16px; margin: 0; background: linear-gradient(#55709c, #55709c) center / 100% 1px no-repeat; }
.right input::-webkit-slider-thumb { appearance: none; width: 9px; height: 13px; border: 1px solid #55709c; border-radius: 1px 1px 5px 5px; background: #dfe9f8; }

/* taskbar */
.taskbar { position: relative; isolation: isolate; display: flex; flex: none; align-items: stretch; gap: 3px; height: 40px; border-top: 1px solid #77633c; background: linear-gradient(90deg, #b7853a, #b47c24 30%, #b8822c 38%, #b07028 49%, #9b7d3e 49.1%, #9b7d3e 55.300%, #bfa876 55.400%, #bca370 100%); }
.taskbar::after { content: ""; position: absolute; z-index: -1; right: 0; top: 0; bottom: 0; width: 205px; background: linear-gradient(100deg, #b98322 45%, #c29a3c); clip-path: polygon(0 0, 100% 0, 100% 100%, 80px 100%); }
.app { width: 59px; display: flex; align-items: center; justify-content: center; }
.app.start { width: 49px; }
.app.open { border: 1px solid #d8b57c; background: rgba(214, 178, 120, .45); }
.app.now { border-color: #fdf3df; background: linear-gradient(135deg, #e2c9a0, #c69f62); }
.beta { font: bold 6px "Open Sans", sans-serif; fill: #fff; }
.cmdt { font: bold 9px "Liberation Mono", monospace; fill: #fff; }
.wd { font: italic bold 12px "Liberation Serif", serif; fill: #2f5ba4; }
.tray { display: flex; align-items: center; gap: 9px; margin-left: auto; padding-right: 17px; color: #fff; }
.clock { display: flex; flex-direction: column; align-items: center; margin-left: 8px; line-height: 17px; }
```
